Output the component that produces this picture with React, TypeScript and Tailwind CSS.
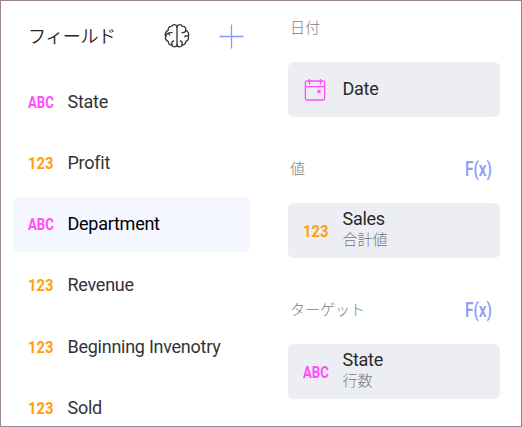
import React from 'react';

type Kind = 'text' | 'number' | 'date';

function CalendarIcon() {
  return (
    <svg width="22" height="24" viewBox="0 0 22 24" fill="none" stroke="#ff4dfa" strokeWidth="1.3">
      <rect x="1.4" y="3" width="19.2" height="19" rx="1.5" />
      <path d="M1.4 8.6h19.2M5.5 1v5.5M16.5 1v5.5" />
      <rect x="13.5" y="12" width="3" height="3" fill="#ff4dfa" stroke="none" />
    </svg>
  );
}

function BrainHalf() {
  return (
    <path d="M13 3.8C12.3 1 8.7 .8 7.8 3.4C5.2 3 3.8 5 4.3 7.2C2 8.4 .4 10.9 1.8 13.2C.8 15.5 2 17.7 4.2 18.3C4.3 21 6 22.2 8 21.9C9 24.6 12.3 24.6 13 22" />
  );
}

function BrainIcon() {
  return (
    <svg width="26" height="26" viewBox="0 0 26 26" fill="none" stroke="#37373a" strokeWidth="1.35" strokeLinecap="round" strokeLinejoin="round">
      <BrainHalf />
      <path d="M1.8 13.2C2.5 10.7 4.6 9.4 8 9.7M5 10C4.8 10.8 5 11.5 5.5 12M8 21.9C7.2 20 7.8 18.5 9.6 18" />
      <g transform="translate(26 0) scale(-1 1)">
        <BrainHalf />
        <path d="M4.3 7.2C4.4 8.8 5.8 9.9 8 9.6M1.8 13.2C3 12.3 4.4 12.6 5.2 13.8M8 21.9C7.2 20 7.8 18.5 9.6 18" />
      </g>
      <path d="M13 3.8V22" />
    </svg>
  );
}

function TypeIcon({ kind }: { kind: Kind }) {
  if (kind === 'date') return <span className="flex w-[26px] pl-px"><CalendarIcon /></span>;
  return (
    <span className="flex w-[26px] shrink-0">
      {kind === 'text' ? (
        <span className="origin-left scale-x-[0.77] text-[17px] font-bold leading-5 text-[#ff4dfa]">ABC</span>
      ) : (
        <span className="origin-left scale-x-[0.87] text-[17px] font-bold leading-5 text-[#ff9f0a]">123</span>
      )}
    </span>
  );
}

function FieldRow({ kind, name, active }: { kind: Kind; name: string; active?: boolean }) {
  return (
    <li className={`flex h-[55px] items-center rounded-md pb-0.5 pl-[15px] nth-[5]:mt-[0.5px] ${active ? 'bg-[#f4f7ff] text-black' : 'text-[#333336]'}`}>
      <TypeIcon kind={kind} />
      <span className="ml-[13.5px] text-lg leading-6 tracking-[-0.26px] whitespace-nowrap">{name}</span>
    </li>
  );
}

function Slot({ label, kind, name, summary, formula }: { label: string; kind: Kind; name: string; summary?: string; formula?: boolean }) {
  return (
    <section className="h-[141px]">
      <header className="flex h-[41px] items-center justify-between pr-[7px] pl-0.5">
        <h3 className="pb-0.5 font-['Noto_Sans_CJK_JP',sans-serif] text-[15px] font-light leading-5 text-[#7e7e80]">{label}</h3>
        {formula && (
          <span className="flex w-7">
            <span className="origin-left scale-x-[0.77] text-xl font-semibold leading-6 text-[#8f9ff8]">F(x)</span>
          </span>
        )}
      </header>
      <div className="mt-3.5 flex h-[55px] items-center rounded-md bg-[#edeef4] pl-[15px]">
        <TypeIcon kind={kind} />
        <div className={`ml-[13.5px] flex flex-col ${summary ? 'pb-[5px]' : 'pb-px'}`}>
          <span className="text-lg leading-[22px] tracking-[-0.26px] text-[#29292c]">{name}</span>
          {summary && <span className="-mt-px font-['Noto_Sans_CJK_JP',sans-serif] text-[15px] font-light leading-5 text-[#77777c]">{summary}</span>}
        </div>
      </div>
    </section>
  );
}

export default function App() {
  return (
    <main className="flex h-[427px] w-[522px] overflow-hidden border border-[#9b8595] bg-white font-['Roboto','Noto_Sans_CJK_JP',sans-serif]">
      <div className="ml-3 w-[237px]">
        <header className="flex h-[74px] items-start pt-[22px] pl-[15px]">
          <h2 className="w-[136px] font-['Noto_Sans_CJK_JP',sans-serif] text-lg font-[350] leading-6 tracking-[-0.4px] text-[#222225]">フィールド</h2>
          <BrainIcon />
          <svg className="ml-[29px] mt-px" width="25" height="25" viewBox="0 0 25 25" stroke="#879bfa" strokeWidth="1.3">
            <path d="M.5 12.5h24M12.5 .5v24" />
          </svg>
        </header>
        <ul className="flex flex-col gap-[6.2px]">
          <FieldRow kind="text" name="State" />
          <FieldRow kind="number" name="Profit" />
          <FieldRow kind="text" name="Department" active />
          <FieldRow kind="number" name="Revenue" />
          <FieldRow kind="number" name="Beginning Invenotry" />
          <FieldRow kind="number" name="Sold" />
        </ul>
      </div>
      <div className="ml-[38px] w-[212px] pt-1.5">
        <Slot label="日付" kind="date" name="Date" />
        <Slot label="値" kind="number" name="Sales" summary="合計値" formula />
        <Slot label="ターゲット" kind="text" name="State" summary="行数" formula />
      </div>
    </main>
  );
}
